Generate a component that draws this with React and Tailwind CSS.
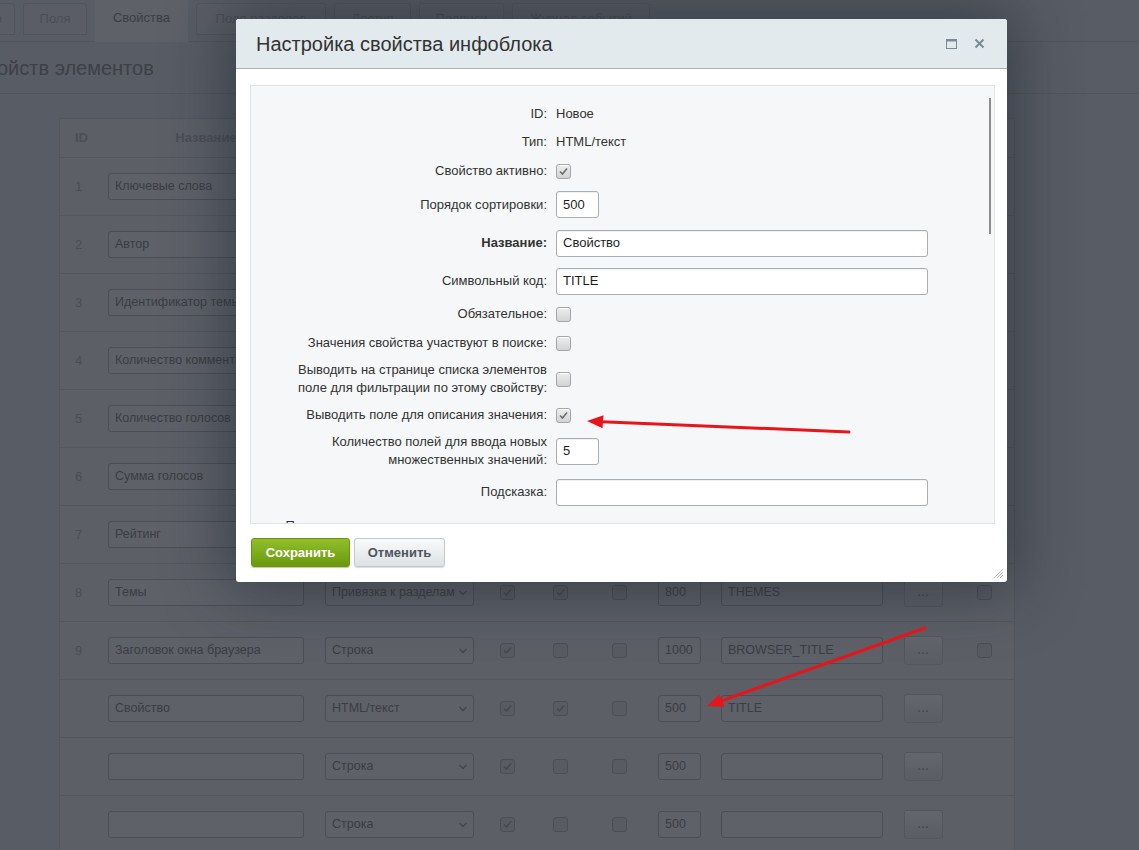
import React from 'react';
import { ChevronDown } from 'lucide-react';

const tabs = [
  { label: 'Поля', w: 'w-[64px]' },
  { label: 'Свойства', w: 'w-[93px]', active: true },
  { label: 'Поля разделов', w: 'w-[130px]' },
  { label: 'Доступ', w: 'w-[77px]' },
  { label: 'Подписи', w: 'w-[85px]' },
  { label: 'Журнал событий', w: 'w-[138px]' },
];

const tableRows = [
  { id: '1', name: 'Ключевые слова', type: 'Строка', c: [true, false, false], sort: '100', code: 'KEYWORDS', last: true },
  { id: '2', name: 'Автор', type: 'Строка', c: [true, false, false], sort: '200', code: 'AUTHOR', last: true },
  { id: '3', name: 'Идентификатор темы форума', type: 'Число', c: [true, false, false], sort: '300', code: 'FORUM_TOPIC_ID', last: true },
  { id: '4', name: 'Количество комментариев', type: 'Число', c: [true, false, false], sort: '400', code: 'FORUM_MESSAGE_CNT', last: true },
  { id: '5', name: 'Количество голосов', type: 'Число', c: [true, false, false], sort: '500', code: 'vote_count', last: true },
  { id: '6', name: 'Сумма голосов', type: 'Число', c: [true, false, false], sort: '600', code: 'vote_sum', last: true },
  { id: '7', name: 'Рейтинг', type: 'Число', c: [true, false, false], sort: '700', code: 'rating', last: true },
  { id: '8', name: 'Темы', type: 'Привязка к разделам', c: [true, true, false], sort: '800', code: 'THEMES', last: true },
  { id: '9', name: 'Заголовок окна браузера', type: 'Строка', c: [true, false, false], sort: '1000', code: 'BROWSER_TITLE', last: true },
  { id: '', name: 'Свойство', type: 'HTML/текст', c: [true, true, false], sort: '500', code: 'TITLE', last: false },
  { id: '', name: '', type: 'Строка', c: [true, false, false], sort: '500', code: '', last: false },
  { id: '', name: '', type: 'Строка', c: [true, false, false], sort: '500', code: '', last: false },
];

const DimBox = ({ children, className = '' }) => (
  <div
    className={`flex h-[27px] shrink-0 items-center overflow-hidden whitespace-nowrap rounded-[3px] border border-[#4b4e55] bg-[#5e6168] px-[6px] text-[12.5px] text-[#3a3d43] ${className}`}
  >
    {children}
  </div>
);

const DimCheck = ({ checked, className = '' }) => (
  <div
    className={`flex h-[15px] w-[15px] shrink-0 items-center justify-center rounded-[3px] border border-[#4b4e55] bg-[#585b62] ${className}`}
  >
    {checked ? (
      <svg width="11" height="11" viewBox="0 0 11 11">
        <path d="M2 5.5 L4.5 8 L9 2.5" fill="none" stroke="#45484e" strokeWidth="1.5" />
      </svg>
    ) : null}
  </div>
);

const TableRow = ({ row }) => (
  <div className="flex h-[58px] items-center border-b border-[#53565c]">
    <div className="w-[48px] shrink-0 pl-[15px] text-[13px] text-[#4a4d53]">{row.id}</div>
    <DimBox className="w-[196px]">{row.name}</DimBox>
    <DimBox className="ml-[21px] w-[149px] justify-between pr-[4px]">
      <span className="overflow-hidden">{row.type}</span>
      <ChevronDown size={12} strokeWidth={3} className="shrink-0 text-[#44474d]" />
    </DimBox>
    <DimCheck className="ml-[26px]" checked={row.c[0]} />
    <DimCheck className="ml-[38px]" checked={row.c[1]} />
    <DimCheck className="ml-[44px]" checked={row.c[2]} />
    <DimBox className="ml-[31px] w-[43px]">{row.sort}</DimBox>
    <DimBox className="ml-[20px] w-[162px]">{row.code}</DimBox>
    <div className="ml-[21px] flex h-[29px] w-[39px] shrink-0 items-center justify-center rounded-[3px] border border-[#53565c] bg-linear-to-b from-[#63666d] to-[#5a5d64] text-[11px] font-bold tracking-[1px] text-[#45484e]">
      ...
    </div>
    {row.last ? <DimCheck className="ml-[34px]" checked={false} /> : null}
  </div>
);

const Check = ({ checked }) => (
  <div className="flex h-[15px] w-[15px] items-center justify-center rounded-[3px] border border-[#a2a6a9] bg-linear-to-b from-[#ededed] to-[#d2d4d5] shadow-[inset_0_1px_0_#fff]">
    {checked ? (
      <svg width="11" height="11" viewBox="0 0 11 11">
        <path d="M2 5.5 L4.5 8 L9 2.5" fill="none" stroke="#6c6e70" strokeWidth="1.6" />
      </svg>
    ) : null}
  </div>
);

const Field = ({ value = '', className = '' }) => (
  <div
    className={`flex h-[27px] items-center rounded-[3px] border border-[#a8aeb2] bg-white px-[6px] text-[13px] text-[#1f1f1f] shadow-[inset_0_1px_1px_rgba(0,0,0,0.06)] ${className}`}
  >
    {value}
  </div>
);

const FormRow = ({ label, h, bold, children }) => (
  <div className={`flex items-center ${h}`}>
    <div
      className={`w-[296px] shrink-0 text-right text-[13px] leading-[18px] text-[#333] ${bold ? 'font-bold' : ''}`}
    >
      {label}
    </div>
    <div className="ml-[9px] flex flex-1 items-center text-[13px] text-[#333]">{children}</div>
  </div>
);

export default function App() {
  return (
    <div className="relative h-[850px] w-[1139px] overflow-hidden bg-[#585c64] font-['Liberation_Sans',Arial,sans-serif]">
      {/* tabs */}
      <div className="flex h-[42px] items-start gap-[8px] border-b border-[#51555b]">
        <div className="ml-[-40px] mt-[3px] flex h-[32px] w-[55px] items-center justify-end rounded-t-[3px] border border-[#51555b] bg-[#5a5d65] pr-[12px] text-[13px] text-[#4a4d54]">
          ео
        </div>
        {tabs.map((tab) =>
          tab.active ? (
            <div
              key={tab.label}
              className={`flex h-[42px] items-center justify-center bg-[#5e6168] pb-[6px] text-[13px] text-[#3b3e45] ${tab.w}`}
            >
              {tab.label}
            </div>
          ) : (
            <div
              key={tab.label}
              className={`mt-[3px] flex h-[32px] items-center justify-center rounded-t-[3px] border border-[#51555b] bg-[#5a5d65] text-[13px] text-[#4a4d54] ${tab.w}`}
            >
              {tab.label}
            </div>
          )
        )}
      </div>

      {/* heading */}
      <div className="flex h-[52px] items-center border-b border-[#51555b]">
        <div className="ml-[-3px] text-[20px] text-[#3d4047]">ойств элементов</div>
      </div>

      {/* table */}
      <div className="ml-[59px] mt-[24px] w-[956px] border-x border-t border-[#53565c] bg-[#5c5f66]">
        <div className="flex h-[39px] items-center border-b border-[#53565c] text-[13px] font-bold text-[#4b4e55]">
          <div className="w-[48px] pl-[15px]">ID</div>
          <div className="w-[196px] text-center">Название</div>
          <div className="ml-[21px] w-[149px] text-center">Тип</div>
        </div>
        {tableRows.map((row, i) => (
          <TableRow key={i} row={row} />
        ))}
      </div>

      {/* modal */}
      <div className="absolute left-[236px] top-[19px] flex h-[563px] w-[771px] flex-col rounded-[3px] bg-white shadow-[0_0_60px_8px_rgba(28,38,48,0.55)]">
        <div className="flex h-[50px] shrink-0 items-center justify-between rounded-t-[3px] border-b border-[#a9b0b4] bg-[#e2eaed] pl-[20px] pr-[22px]">
          <div className="text-[20px] text-[#333]">Настройка свойства инфоблока</div>
          <div className="flex items-center gap-[17px]">
            <svg width="11" height="10" viewBox="0 0 11 10">
              <rect x="0.5" y="0.5" width="10" height="9" fill="none" stroke="#7b8993" />
              <rect x="0.5" y="0.5" width="10" height="2" fill="#7b8993" />
            </svg>
            <svg width="11" height="11" viewBox="0 0 11 11">
              <path d="M1.5 1.5 L9.5 9.5 M9.5 1.5 L1.5 9.5" stroke="#7b8993" strokeWidth="2" />
            </svg>
          </div>
        </div>

        <div className="relative flex-1 pl-[14px] pt-[16px]">
          <div className="relative h-[439px] w-[745px] overflow-hidden border border-[#dde3e6] bg-[#f5f7f8] pt-[14px]">
            <FormRow label="ID:" h="h-[28px]">Новое</FormRow>
            <FormRow label="Тип:" h="h-[28px]">HTML/текст</FormRow>
            <FormRow label="Свойство активно:" h="h-[30px]">
              <Check checked />
            </FormRow>
            <FormRow label="Порядок сортировки:" h="h-[37px]">
              <Field value="500" className="w-[43px]" />
            </FormRow>
            <FormRow label="Название:" h="h-[40px]" bold>
              <Field value="Свойство" className="w-[372px]" />
            </FormRow>
            <FormRow label="Символьный код:" h="h-[36px]">
              <Field value="TITLE" className="w-[372px]" />
            </FormRow>
            <FormRow label="Обязательное:" h="h-[30px]">
              <Check />
            </FormRow>
            <FormRow label="Значения свойства участвуют в поиске:" h="h-[28px]">
              <Check />
            </FormRow>
            <FormRow
              label={
                <>
                  Выводить на странице списка элементов
                  <br />
                  поле для фильтрации по этому свойству:
                </>
              }
              h="h-[44px]"
            >
              <Check />
            </FormRow>
            <FormRow label="Выводить поле для описания значения:" h="h-[28px]">
              <Check checked />
            </FormRow>
            <FormRow
              label={
                <>
                  Количество полей для ввода новых
                  <br />
                  множественных значений:
                </>
              }
              h="h-[44px]"
            >
              <Field value="5" className="w-[43px]" />
            </FormRow>
            <FormRow label="Подсказка:" h="h-[38px]">
              <Field className="w-[372px]" />
            </FormRow>
            <div className="flex pt-[6px]">
              <div className="w-[285px] text-right text-[13px] leading-[18px] text-[#333]">
                Показывать на странице редактирования
              </div>
            </div>
            <div className="absolute right-[3px] top-[12px] h-[136px] w-[2px] bg-[#8a8e91]" />
          </div>

          <div className="mt-[14px] flex gap-[4px] pl-[1px]">
            <div className="flex h-[29px] w-[99px] items-center justify-center rounded-[3px] border border-[#6a9410] bg-linear-to-b from-[#91bf2a] to-[#6a990b] text-[13px] font-bold text-white shadow-[0_1px_1px_rgba(0,0,0,0.25)]">
              Сохранить
            </div>
            <div className="flex h-[29px] w-[91px] items-center justify-center rounded-[3px] border border-[#c3c9cd] bg-linear-to-b from-[#f9fafa] to-[#dee2e4] text-[13px] font-bold text-[#4e565d] shadow-[0_1px_1px_rgba(0,0,0,0.15)]">
              Отменить
            </div>
          </div>

          <svg className="absolute bottom-[3px] right-[3px]" width="12" height="12" viewBox="0 0 12 12">
            <path d="M11 2 L2 11 M11 5 L5 11 M11 8 L8 11" stroke="#b5b9bc" strokeWidth="1" />
          </svg>
        </div>
      </div>

      {/* red arrows */}
      <svg className="pointer-events-none absolute left-0 top-0" width="1139" height="850" viewBox="0 0 1139 850">
        <line x1="849" y1="432" x2="602" y2="421.7" stroke="#e8141b" strokeWidth="3" strokeLinecap="round" />
        <polygon points="587,421 603.5,415.2 602.5,428.2" fill="#e8141b" />
        <line x1="925" y1="628" x2="721" y2="701" stroke="#e8141b" strokeWidth="3" strokeLinecap="round" />
        <polygon points="707,706 719.5,694.5 724.5,706.8" fill="#e8141b" />
      </svg>
    </div>
  );
}
